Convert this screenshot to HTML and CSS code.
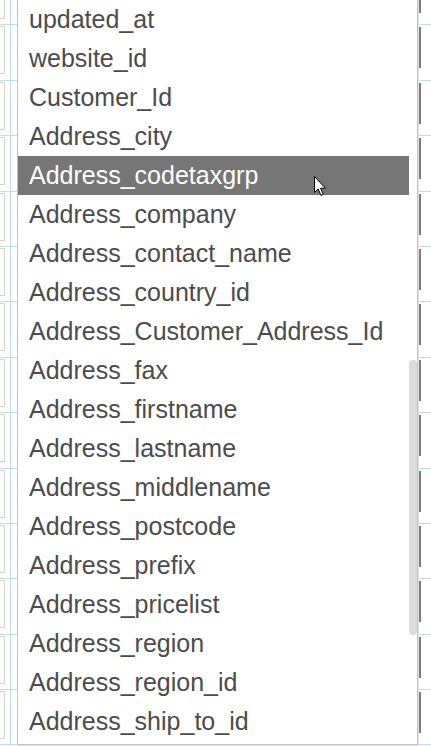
FILE: index.html
```html
<!DOCTYPE html>
<html>
<head>
<meta charset="utf-8">
<link rel="stylesheet" href="styles.css">
</head>
<body>
<div class="grid">
  <div class="row"><div class="cell-left"><div class="box"></div></div><div class="cell-mid"></div><div class="cell-right"><div class="bar"></div></div></div>
  <div class="row"><div class="cell-left"><div class="box"></div></div><div class="cell-mid"></div><div class="cell-right"><div class="bar"></div></div></div>
  <div class="row"><div class="cell-left"><div class="box"></div></div><div class="cell-mid"></div><div class="cell-right"><div class="bar"></div></div></div>
  <div class="row"><div class="cell-left"><div class="box"></div></div><div class="cell-mid"></div><div class="cell-right"><div class="bar"></div></div></div>
  <div class="row"><div class="cell-left"><div class="box"></div></div><div class="cell-mid"></div><div class="cell-right"><div class="bar"></div></div></div>
  <div class="row"><div class="cell-left"><div class="box"></div></div><div class="cell-mid"></div><div class="cell-right"><div class="bar"></div></div></div>
  <div class="row"><div class="cell-left"><div class="box"></div></div><div class="cell-mid"></div><div class="cell-right"><div class="bar"></div></div></div>
  <div class="row"><div class="cell-left"><div class="box"></div></div><div class="cell-mid"></div><div class="cell-right"><div class="bar"></div></div></div>
  <div class="row"><div class="cell-left"><div class="box"></div></div><div class="cell-mid"></div><div class="cell-right"><div class="bar"></div></div></div>
  <div class="row"><div class="cell-left"><div class="box"></div></div><div class="cell-mid"></div><div class="cell-right"><div class="bar"></div></div></div>
  <div class="row"><div class="cell-left"><div class="box"></div></div><div class="cell-mid"></div><div class="cell-right"><div class="bar"></div></div></div>
  <div class="row"><div class="cell-left"><div class="box"></div></div><div class="cell-mid"></div><div class="cell-right"><div class="bar"></div></div></div>
  <div class="row"><div class="cell-left"><div class="box"></div></div><div class="cell-mid"></div><div class="cell-right"><div class="bar"></div></div></div>
  <div class="row"><div class="cell-left"><div class="box"></div></div><div class="cell-mid"></div><div class="cell-right"><div class="bar"></div></div></div>
</div>

<div class="dropdown">
  <ul class="list">
    <li>updated_at</li>
    <li>website_id</li>
    <li>Customer_Id</li>
    <li>Address_city</li>
    <li class="active">Address_codetaxgrp</li>
    <li>Address_company</li>
    <li>Address_contact_name</li>
    <li>Address_country_id</li>
    <li>Address_Customer_Address_Id</li>
    <li>Address_fax</li>
    <li>Address_firstname</li>
    <li>Address_lastname</li>
    <li>Address_middlename</li>
    <li>Address_postcode</li>
    <li>Address_prefix</li>
    <li>Address_pricelist</li>
    <li>Address_region</li>
    <li>Address_region_id</li>
    <li>Address_ship_to_id</li>
  </ul>
  <div class="scrollbar"><div class="thumb"></div></div>
</div>

<svg class="cursor" width="13" height="22" viewBox="0 0 13 22">
  <path d="M0.5 0.5 L0.5 16.5 L4.2 12.9 L7 19.5 L9.3 18.5 L6.6 12.2 L11.5 12.2 Z" fill="#ffffff" stroke="#000000" stroke-width="1" stroke-linejoin="miter"/>
</svg>
</body>
</html>
```

FILE: styles.css
```css
html, body {
  margin: 0;
  padding: 0;
  background: #ffffff;
  overflow: hidden;
  width: 431px;
  height: 746px;
}

.grid {
  margin-top: -30px;
}

.row {
  display: flex;
  height: 55.4px;
  box-sizing: border-box;
  border-bottom: 1px solid #bcdcf0;
}

.cell-left {
  width: 11px;
  flex: none;
  box-sizing: border-box;
  border-right: 1px solid #bcdcf0;
  overflow: hidden;
}

.box {
  margin: 1px 0 0 -5px;
  width: 10px;
  height: 48px;
  box-sizing: border-box;
  border: 1px solid #d8d5c6;
}

.cell-mid {
  flex: 1;
}

.cell-right {
  width: 13px;
  flex: none;
}

.bar {
  margin: 2px 0 0 1px;
  width: 2px;
  height: 41px;
  background: #7c7c7c;
}

.dropdown {
  position: absolute;
  left: 17px;
  top: -1px;
  width: 401px;
  height: 746px;
  box-sizing: border-box;
  border: 1px solid #c2c2c2;
  background: #ffffff;
  box-shadow: 1px 1px 0 #e4e4e4;
  display: flex;
  overflow: hidden;
}

.list {
  list-style: none;
  margin: 0;
  padding: 0;
  width: 391px;
  flex: none;
}

.list li {
  height: 39px;
  line-height: 39px;
  padding-left: 11px;
  font-family: "Liberation Sans", Arial, sans-serif;
  font-size: 25px;
  color: #4c4c4c;
  white-space: nowrap;
}

.list li.active {
  background: #767676;
  color: #ffffff;
}

.scrollbar {
  width: 8px;
  flex: none;
}

.thumb {
  margin-top: 360px;
  height: 275px;
  border-radius: 4px;
  background: #dcdcdc;
}

.cursor {
  position: absolute;
  left: 314px;
  top: 176px;
}
```
